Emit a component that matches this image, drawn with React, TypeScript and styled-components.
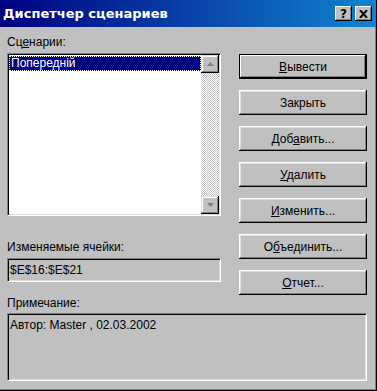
import React from 'react'
import styled, { createGlobalStyle } from 'styled-components'

const GlobalStyle = createGlobalStyle`
  html, body {
    margin: 0;
    padding: 0;
    background: #c0c0c0;
  }
  body {
    font-family: 'Liberation Sans', Arial, sans-serif;
    font-size: 12px;
    color: #000;
  }
`

const Window = styled.div`
  width: 377px;
  height: 391px;
  box-sizing: border-box;
  background: #c0c0c0;
  border-right: 1px solid #000;
  border-bottom: 1px solid #000;
  box-shadow: inset -1px -1px 0 #808080;
  display: flex;
  flex-direction: column;
`

const TitleBar = styled.div`
  height: 27px;
  flex-shrink: 0;
  background: linear-gradient(to right, #000080, #1084d0);
  display: flex;
  align-items: center;
  justify-content: space-between;
  padding: 0 4px 0 3px;
`

const TitleText = styled.span`
  color: #fff;
  font-family: 'DejaVu Sans', Verdana, sans-serif;
  font-weight: bold;
  font-size: 13px;
`

const TitleButtons = styled.div`
  display: flex;
  gap: 3px;
`

const TitleButton = styled.div`
  width: 17px;
  height: 15px;
  background: #c0c0c0;
  box-shadow: inset -1px -1px #000, inset 1px 1px #fff, inset -2px -2px #808080;
  display: flex;
  align-items: center;
  justify-content: center;
  font-family: 'DejaVu Sans', Verdana, sans-serif;
  font-weight: bold;
  font-size: 12px;
  line-height: 1;
`

const Body = styled.div`
  padding: 8px 9px 0 7px;
  display: flex;
  flex-direction: column;
`

const TopRow = styled.div`
  display: flex;
  gap: 18px;
`

const LeftCol = styled.div`
  width: 214px;
  display: flex;
  flex-direction: column;
`

const Label = styled.div<{ gapTop?: number }>`
  height: 15px;
  line-height: 15px;
  margin-top: ${(p) => p.gapTop || 0}px;
`

const Sunken = styled.div<{ h: number; gapTop?: number; fill?: string }>`
  box-sizing: border-box;
  height: ${(p) => p.h}px;
  margin-top: ${(p) => p.gapTop || 0}px;
  border: 1px solid;
  border-color: #808080 #fff #fff #808080;
  padding: 1px;
  box-shadow: inset 1px 1px #000, inset -1px -1px #dfdfdf;
  background: ${(p) => p.fill || '#c0c0c0'};
`

const ListInner = styled.div`
  display: flex;
  height: 100%;
`

const Items = styled.div`
  flex: 1;
  background: #fff;
  padding-top: 1px;
`

const Item = styled.div<{ selected?: boolean }>`
  height: 15px;
  line-height: 15px;
  padding: 0 2px;
  background: ${(p) => (p.selected ? '#000080' : 'transparent')};
  color: ${(p) => (p.selected ? '#fff' : '#000')};
  outline: ${(p) => (p.selected ? '1px dotted #fff' : 'none')};
  outline-offset: -1px;
`

const ScrollBar = styled.div`
  width: 18px;
  display: flex;
  flex-direction: column;
`

const ScrollButton = styled.div`
  height: 18px;
  background: #c0c0c0;
  box-shadow: inset -1px -1px #000, inset 1px 1px #dfdfdf, inset -2px -2px #808080, inset 2px 2px #fff;
  display: flex;
  align-items: center;
  justify-content: center;
`

const Track = styled.div`
  flex: 1;
  background: repeating-conic-gradient(#fff 0 25%, #c0c0c0 0 50%) 0 0 / 2px 2px;
`

const FieldText = styled.div`
  padding: 3px 1px;
  line-height: 14px;
`

const RightCol = styled.div`
  margin-top: 19px;
  display: flex;
  flex-direction: column;
  gap: 11px;
`

const Button = styled.div<{ isDefault?: boolean }>`
  width: 128px;
  height: 25px;
  background: #c0c0c0;
  display: flex;
  align-items: center;
  justify-content: center;
  box-shadow: ${(p) =>
    p.isDefault
      ? 'inset 0 0 0 1px #000, inset -2px -2px #000, inset 2px 2px #fff, inset -3px -3px #808080'
      : 'inset -1px -1px #000, inset 1px 1px #fff, inset -2px -2px #808080, inset 2px 2px #dfdfdf'};
`

const Arrow = ({ down }: { down?: boolean }) => (
  <svg width='9' height='6' viewBox='0 0 9 6'>
    <polygon
      points={down ? '1,1 8,1 4.5,5' : '1,5 8,5 4.5,1'}
      fill='#808080'
    />
  </svg>
)

const BUTTONS: { id: number; node: React.ReactNode; isDefault?: boolean }[] = [
  { id: 1, node: <><u>В</u>ывести</>, isDefault: true },
  { id: 2, node: <>Закрыть</> },
  { id: 3, node: <>Доб<u>а</u>вить...</> },
  { id: 4, node: <><u>У</u>далить</> },
  { id: 5, node: <><u>И</u>зменить...</> },
  { id: 6, node: <>О<u>б</u>ъединить...</> },
  { id: 7, node: <><u>О</u>тчет...</> },
]

const App = () => {
  return (
    <Window>
      <GlobalStyle />
      <TitleBar>
        <TitleText>Диспетчер сценариев</TitleText>
        <TitleButtons>
          <TitleButton>?</TitleButton>
          <TitleButton>
            <svg width='9' height='8' viewBox='0 0 9 8'>
              <path d='M1 0 L8 8 M8 0 L1 8' stroke='#000' strokeWidth='2' />
            </svg>
          </TitleButton>
        </TitleButtons>
      </TitleBar>
      <Body>
        <TopRow>
          <LeftCol>
            <Label>
              Сц<u>е</u>нарии:
            </Label>
            <Sunken h={163} gapTop={3} fill='#fff'>
              <ListInner>
                <Items>
                  <Item selected>Попередній</Item>
                </Items>
                <ScrollBar>
                  <ScrollButton>
                    <Arrow />
                  </ScrollButton>
                  <Track />
                  <ScrollButton>
                    <Arrow down />
                  </ScrollButton>
                </ScrollBar>
              </ListInner>
            </Sunken>
            <Label gapTop={24}>Изменяемые ячейки:</Label>
            <Sunken h={24} gapTop={3}>
              <FieldText>$E$16:$E$21</FieldText>
            </Sunken>
          </LeftCol>
          <RightCol>
            {BUTTONS.map((b) => (
              <Button key={b.id} isDefault={b.isDefault}>
                <span>{b.node}</span>
              </Button>
            ))}
          </RightCol>
        </TopRow>
        <Label gapTop={1}>Примечание:</Label>
        <Sunken h={68} gapTop={2}>
          <FieldText>Автор: Master , 02.03.2002</FieldText>
        </Sunken>
      </Body>
    </Window>
  )
}

export default App
